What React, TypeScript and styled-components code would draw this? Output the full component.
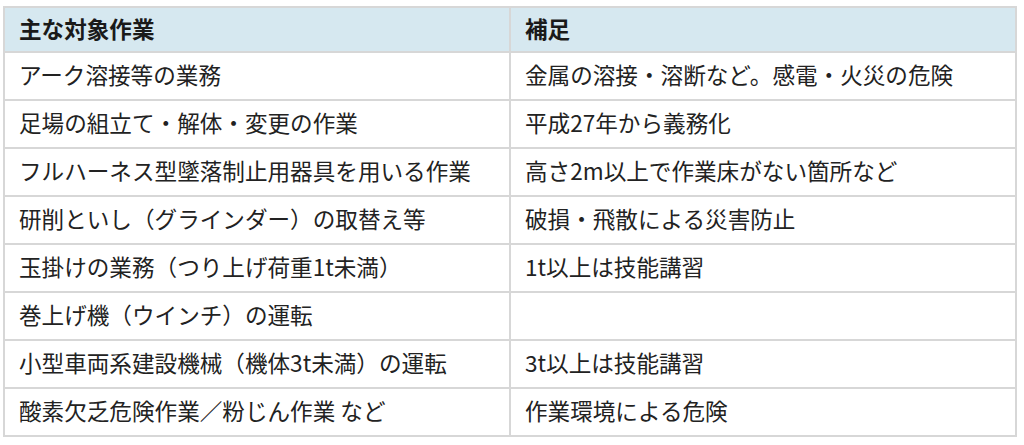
import React from 'react';
import styled, { createGlobalStyle } from 'styled-components';

const GlobalStyle = createGlobalStyle`
  html, body {
    margin: 0;
    padding: 0;
    background: #ffffff;
  }
  body {
    font-family: "Noto Sans CJK JP", "Noto Sans", sans-serif;
    color: #222222;
  }
`;

const Page = styled.div`
  padding: 6px 6px 0 3px;
`;

const Table = styled.table`
  width: 1014px;
  border-collapse: collapse;
  table-layout: fixed;
  font-size: 22.6px;
  line-height: 32px;
`;

const HeadCell = styled.th`
  background: #d6e8f0;
  border: 2px solid #d7d7d7;
  text-align: left;
  font-weight: 700;
  padding: 5px 14px 6px;
  color: #1a1a1a;
`;

const Cell = styled.td`
  border: 2px solid #d7d7d7;
  padding: 6px 14px 8px;
  height: 32px;
  vertical-align: middle;
  white-space: nowrap;
`;

const rows: [string, string][] = [
  ['アーク溶接等の業務', '金属の溶接・溶断など。感電・火災の危険'],
  ['足場の組立て・解体・変更の作業', '平成27年から義務化'],
  ['フルハーネス型墜落制止用器具を用いる作業', '高さ2m以上で作業床がない箇所など'],
  ['研削といし（グラインダー）の取替え等', '破損・飛散による災害防止'],
  ['玉掛けの業務（つり上げ荷重1t未満）', '1t以上は技能講習'],
  ['巻上げ機（ウインチ）の運転', ''],
  ['小型車両系建設機械（機体3t未満）の運転', '3t以上は技能講習'],
  ['酸素欠乏危険作業／粉じん作業 など', '作業環境による危険'],
];

export default function App() {
  return (
    <>
      <GlobalStyle />
      <Page>
        <Table>
          <thead>
            <tr>
              <HeadCell>主な対象作業</HeadCell>
              <HeadCell>補足</HeadCell>
            </tr>
          </thead>
          <tbody>
            {rows.map(([work, note]) => (
              <tr key={work}>
                <Cell>{work}</Cell>
                <Cell>{note}</Cell>
              </tr>
            ))}
          </tbody>
        </Table>
      </Page>
    </>
  );
}
